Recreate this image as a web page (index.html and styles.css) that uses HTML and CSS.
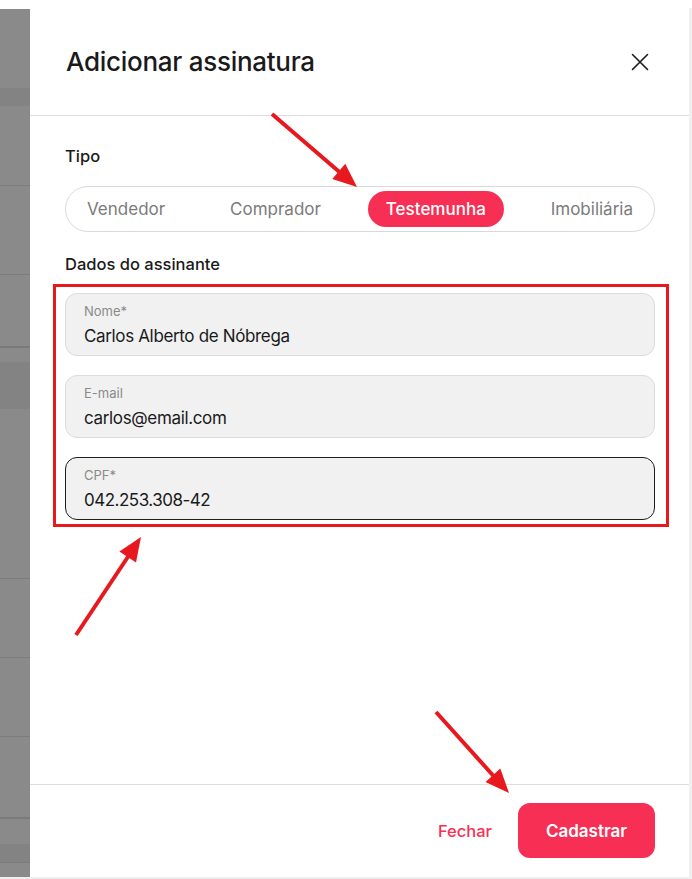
FILE: index.html
```html
<!DOCTYPE html>
<html lang="pt-BR">
<head>
<meta charset="utf-8">
<title>Adicionar assinatura</title>
<link rel="stylesheet" href="styles.css">
</head>
<body>
<div class="screen">
  <div class="backdrop"></div>
  <aside class="drawer">
    <header class="drawer-header">
      <h1 class="drawer-title">Adicionar assinatura</h1>
      <button class="close-btn" aria-label="Fechar">
        <svg width="18" height="18" viewBox="0 0 18 18"><path d="M1.5 1.5 L16.5 16.5 M16.5 1.5 L1.5 16.5" stroke="#1a1a1a" stroke-width="1.6" fill="none" stroke-linecap="round"/></svg>
      </button>
    </header>
    <section class="drawer-body">
      <h2 class="section-label">Tipo</h2>
      <div class="segmented">
        <button class="seg">Vendedor</button>
        <button class="seg">Comprador</button>
        <button class="seg seg-active">Testemunha</button>
        <button class="seg">Imobiliária</button>
      </div>
      <h2 class="section-label section-label-2">Dados do assinante</h2>
      <div class="fields">
        <div class="field">
          <span class="field-label">Nome*</span>
          <span class="field-value">Carlos Alberto de Nóbrega</span>
        </div>
        <div class="field">
          <span class="field-label">E-mail</span>
          <span class="field-value">carlos@email.com</span>
        </div>
        <div class="field field-focus">
          <span class="field-label">CPF*</span>
          <span class="field-value field-value-num">042.253.308-42</span>
        </div>
      </div>
    </section>
    <footer class="drawer-footer">
      <button class="btn-link">Fechar</button>
      <button class="btn-primary">Cadastrar</button>
    </footer>
  </aside>
  <div class="edge"></div>
</div>
<svg class="annotations" width="692" height="879" viewBox="0 0 692 879">
  <rect x="54.5" y="285.5" width="613" height="240" fill="none" stroke="#e8191e" stroke-width="3"/>
  <g stroke="#e8191e" stroke-width="4" stroke-linecap="butt">
    <line x1="272" y1="114" x2="340" y2="172.5"/>
    <line x1="76" y1="635" x2="128.5" y2="556"/>
    <line x1="436" y1="712" x2="494" y2="776.5"/>
  </g>
  <g fill="#e8191e">
    <polygon points="357,187 332.3,179 345.3,163.8"/>
    <polygon points="141,537 136,562.5 119.4,551.5"/>
    <polygon points="509,793 485.5,781.9 500.3,768.5"/>
  </g>
</svg>
</body>
</html>
```

FILE: styles.css
```css
* { box-sizing: border-box; }

html, body {
  margin: 0;
  padding: 0;
}

body {
  width: 692px;
  height: 879px;
  background: #efefef;
  position: relative;
  overflow: hidden;
  font-family: "Inter", "Liberation Sans", sans-serif;
  color: #1a1a1a;
}

.screen {
  display: flex;
  align-items: flex-start;
  height: 877px;
  background: #ffffff;
}

.backdrop {
  width: 30px;
  height: 868px;
  margin-top: 9px;
  flex: none;
  background: linear-gradient(to bottom,
    #8a8a8a 0, #8a8a8a 79px,
    #838383 79px, #838383 97px,
    #8a8a8a 97px, #8a8a8a 176px,
    #7c7c7c 176px, #7c7c7c 177px,
    #8a8a8a 177px, #8a8a8a 265px,
    #7c7c7c 265px, #7c7c7c 266px,
    #8a8a8a 266px, #8a8a8a 337px,
    #7a7a7a 337px, #7a7a7a 339px,
    #8a8a8a 339px, #8a8a8a 353px,
    #838383 353px, #838383 400px,
    #8a8a8a 400px, #8a8a8a 569px,
    #7c7c7c 569px, #7c7c7c 570px,
    #8a8a8a 570px, #8a8a8a 648px,
    #7c7c7c 648px, #7c7c7c 649px,
    #8a8a8a 649px, #8a8a8a 727px,
    #7c7c7c 727px, #7c7c7c 728px,
    #8a8a8a 728px, #8a8a8a 808px,
    #7a7a7a 808px, #7a7a7a 810px,
    #8a8a8a 810px, #8a8a8a 835px,
    #838383 835px, #838383 853px,
    #7c7c7c 853px, #7c7c7c 854px,
    #8a8a8a 854px, #8a8a8a 868px);
}

.edge {
  width: 3px;
  height: 869px;
  margin-top: 8px;
  flex: none;
  background: #f0f0f0;
}

.drawer {
  width: 659px;
  height: 877px;
  flex: none;
  display: flex;
  flex-direction: column;
  background: #ffffff;
}

.drawer-header {
  height: 116px;
  flex: none;
  display: flex;
  align-items: flex-start;
  justify-content: space-between;
  padding: 46px 40px 0 36px;
  border-bottom: 1px solid #dddddd;
}

.drawer-title {
  margin: 0;
  font-size: 26px;
  line-height: 32px;
  font-weight: 500;
  color: #1a1a1a;
  letter-spacing: -0.28px;
}

.close-btn {
  margin-top: 7px;
  padding: 0;
  border: 0;
  background: none;
  width: 18px;
  height: 18px;
  display: flex;
}

.drawer-body {
  flex: 1;
  padding: 30px 34px 0 35px;
  display: flex;
  flex-direction: column;
}

.section-label {
  margin: 0;
  font-size: 16.5px;
  line-height: 20px;
  font-weight: 500;
  color: #1a1a1a;
}

.section-label-2 {
  margin-top: 22px;
}

.segmented {
  margin-top: 20px;
  height: 46px;
  border: 1px solid #d9d9d9;
  border-radius: 23px;
  padding: 4px 3px;
  display: flex;
  justify-content: space-between;
  align-items: center;
}

.seg {
  height: 36px;
  padding: 0 18px;
  border: 0;
  border-radius: 18px;
  background: transparent;
  font-family: inherit;
  font-size: 17px;
  font-weight: 400;
  color: #7b7b7b;
}

.seg-active {
  background: #f72f55;
  color: #ffffff;
  font-weight: 500;
}

.fields {
  margin-top: 19px;
  display: flex;
  flex-direction: column;
  gap: 19px;
}

.field {
  height: 63px;
  border: 1px solid #dcdcdc;
  border-radius: 12px;
  background: #f1f1f1;
  padding: 9px 18px 0;
  display: flex;
  flex-direction: column;
}

.field-focus {
  border-color: #1f1f1f;
}

.field-label {
  font-size: 13px;
  line-height: 16px;
  color: #8a8a8a;
}

.field-value {
  margin-top: 6px;
  font-size: 17px;
  line-height: 22px;
  color: #1a1a1a;
  letter-spacing: -0.35px;
}

.field-value-num {
  letter-spacing: -0.5px;
}

.drawer-footer {
  height: 93px;
  flex: none;
  border-top: 1px solid #dddddd;
  padding: 18px 34px 0 0;
  display: flex;
  justify-content: flex-end;
  align-items: flex-start;
}

.btn-link {
  height: 55px;
  padding: 0;
  margin-right: 26px;
  border: 0;
  background: none;
  font-family: inherit;
  font-size: 16.5px;
  font-weight: 500;
  color: #f72f55;
}

.btn-primary {
  width: 137px;
  height: 55px;
  border: 0;
  border-radius: 12px;
  background: #f72f55;
  color: #ffffff;
  font-family: inherit;
  font-size: 17px;
  font-weight: 600;
}

.annotations {
  position: absolute;
  left: 0;
  top: 0;
  pointer-events: none;
}
```
